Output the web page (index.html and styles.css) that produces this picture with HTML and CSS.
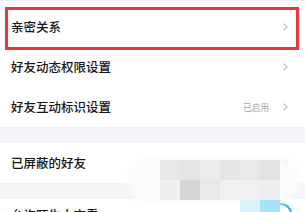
FILE: index.html
```html
<!DOCTYPE html>
<html lang="zh-CN">
<head>
<meta charset="utf-8">
<link rel="stylesheet" href="styles.css">
</head>
<body>
<div class="page">
  <div class="group">
    <div class="row">
      <span class="label">亲密关系</span>
      <span class="right"><svg class="chev" viewBox="0 0 5 8" width="5" height="8"><polyline points="0.6,0.6 4.2,4 0.6,7.4"/></svg></span>
    </div>
    <div class="row">
      <span class="label">好友动态权限设置</span>
      <span class="right"><svg class="chev" viewBox="0 0 5 8" width="5" height="8"><polyline points="0.6,0.6 4.2,4 0.6,7.4"/></svg></span>
    </div>
    <div class="row">
      <span class="label">好友互动标识设置</span>
      <span class="right"><span class="value">已启用</span><svg class="chev" viewBox="0 0 5 8" width="5" height="8"><polyline points="0.6,0.6 4.2,4 0.6,7.4"/></svg></span>
    </div>
  </div>
  <div class="gap"></div>
  <div class="group">
    <div class="row">
      <span class="label">已屏蔽的好友</span>
      <span class="right"><svg class="chev" viewBox="0 0 5 8" width="5" height="8"><polyline points="0.6,0.6 4.2,4 0.6,7.4"/></svg></span>
    </div>
  </div>
  <div class="gap"></div>
  <div class="group">
    <div class="row row-last">
      <span class="label">允许陌生人查看</span>
      <span class="right"><span class="toggle"><span class="knob"></span></span></span>
    </div>
  </div>

  <div class="highlight"></div>
  <div class="blob"></div>
  <div class="mosaic">
    <i style="background:#e8e8e9"></i><i style="background:#e4e4e5"></i><i style="background:#ebebec"></i><i style="background:#e6e6e7"></i><i style="background:#e9e9ea"></i><i style="background:#e3e3e4"></i>
    <i style="background:#efeff1"></i><i style="background:#d6d6d8"></i><i style="background:#e9e9eb"></i><i style="background:#f0f0f2"></i><i style="background:#f0f0f2"></i><i style="background:#eeeef0"></i>
    <i style="background:transparent"></i><i style="background:transparent"></i><i style="background:transparent"></i><i style="background:transparent"></i><i style="background:#d8f3fb"></i><i style="background:#a6e5f7"></i>
  </div>
</div>
</body>
</html>
```
FILE: styles.css
```css
* { box-sizing: border-box; }
html, body { margin: 0; padding: 0; background: #ffffff; }
body {
  font-family: "Noto Sans CJK SC", "Noto Sans", sans-serif;
  color: #1a1a1a;
  width: 305px;
  height: 212px;
  overflow: hidden;
}
.page {
  position: relative;
  padding-top: 6px;
  border-top: 1px solid #eeeef2;
}
.group { background: #ffffff; }
.row {
  height: 40px;
  display: flex;
  align-items: center;
  justify-content: space-between;
  padding: 0 17px 0 11px;
}
.row-last {
  align-items: flex-start;
  padding-top: 10px;
}
.row-last .right { margin-top: -6px; }
.label {
  font-size: 12.5px;
  line-height: 1;
  font-weight: 500;
  color: #161616;
}
.right {
  display: flex;
  align-items: center;
  gap: 14px;
}
.value {
  font-size: 8.6px;
  color: #a3a3a6;
  line-height: 1;
}
.chev {
  display: block;
  fill: none;
  stroke: #b9b9bd;
  stroke-width: 1.1;
}
.gap {
  height: 16px;
  background: #f4f5f8;
}
.toggle {
  display: block;
  width: 38px;
  height: 22px;
  border-radius: 11px;
  background: #16b4f3;
  position: relative;
  margin-right: -4px;
}
.knob {
  position: absolute;
  right: 2px;
  top: 2px;
  width: 18px;
  height: 18px;
  border-radius: 50%;
  background: #ffffff;
}
.highlight {
  position: absolute;
  left: 5px;
  top: 6px;
  width: 294px;
  height: 43px;
  border: 3px solid #ea343e;
}
.blob {
  position: absolute;
  left: 128px;
  top: 155px;
  width: 172px;
  height: 48px;
  border-radius: 24px;
  background: #fbfbfc;
  filter: blur(3px);
}
.mosaic {
  position: absolute;
  left: 160px;
  top: 159px;
  display: grid;
  grid-template-columns: repeat(6, 20px);
  grid-auto-rows: 20px;
}
.mosaic i { display: block; }
```
